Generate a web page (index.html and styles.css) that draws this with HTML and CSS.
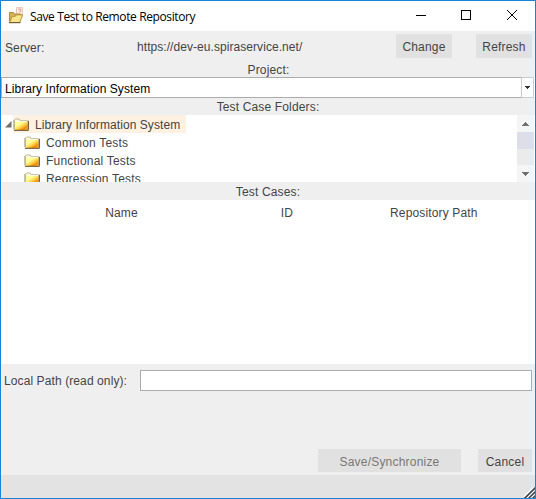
FILE: index.html
```html
<!DOCTYPE html>
<html lang="en">
<head>
<meta charset="utf-8">
<title>Save Test to Remote Repository</title>
<link rel="stylesheet" href="styles.css">
</head>
<body>
<svg width="0" height="0" class="defs">
  <defs>
    <linearGradient id="gold" x1="0" y1="0" x2="1" y2="1">
      <stop offset=".3" stop-color="#ffff99"/><stop offset=".55" stop-color="#ffd24a"/><stop offset=".78" stop-color="#f58a08"/><stop offset="1" stop-color="#ffc04a"/>
    </linearGradient>
    <symbol id="folder" viewBox="0 0 16 13">
      <path d="M1.500 11V2L2.500 1H6l1.500 1.500H15V11z" fill="#fffbd8" stroke="#bdb798"/>
      <path d="M2 4h12.500v8H2z" fill="url(#gold)"/>
      <path d="M.5 2v9.500M6.500 2.500H15" fill="none" stroke="#c9c5ac"/>
      <path d="M1 12.300h14.300V3" fill="none" stroke="#5a4620"/>
    </symbol>
  </defs>
</svg>
<div class="window">
  <header class="titlebar">
    <svg class="app-icon" width="16" height="17" viewBox="0 0 16 17">
      <path d="M8.5.5h5.8v9H8.5z" fill="#fff0e8" stroke="#e8c8b8"/>
      <path d="M10 2.5q3-1.500 3 .5t-2 2M11 6.500l2 1.500" fill="none" stroke="#e8957a"/>
      <path d="M1.500 14V5.500h4l1 1.500h6V10" fill="#d8b355" stroke="#a98a45"/>
      <path d="M1.500 15.500l2.800-6.200h3l1-1.500h6.400l-3 7.700z" fill="#fbe48b" stroke="#b38d38"/>
      <path d="M1 15.700h11.500" stroke="#665127"/>
    </svg>
    <h1><span>Save Test to Remote Repository</span></h1>
    <svg class="controls" width="120" height="30" viewBox="415 1 120 30" fill="none" stroke="#000" shape-rendering="crispEdges">
      <path d="M416 15.500h10M461.500 10.500h9v9h-9z"/>
      <path d="M507 10l10 10M517 10l-10 10" shape-rendering="auto"/>
    </svg>
  </header>
  <section class="server">
    <span class="server-label">Server:</span>
    <span class="server-url">https://dev-eu.spiraservice.net/</span>
    <button class="change">Change</button>
    <button class="refresh">Refresh</button>
  </section>
  <div class="caption project"><span>Project:</span></div>
  <div class="combo">
    <div class="combo-value"><span>Library Information System</span></div>
    <div class="combo-arrow"><svg width="5" height="3" shape-rendering="crispEdges"><path d="M0 0h5v1H4v1H3v1H2V2H1V1H0z" fill="#333"/></svg></div>
  </div>
  <div class="caption folders"><span>Test Case Folders:</span></div>
  <div class="tree">
    <ul>
      <li class="root"><svg class="expander" width="7" height="7"><path d="M6.500 0v6.500H0z" fill="#707070"/></svg><div class="selected"><svg width="16" height="13"><use href="#folder"/></svg><span>Library Information System</span></div></li>
      <li class="child"><svg width="16" height="13"><use href="#folder"/></svg><span>Common Tests</span></li>
      <li class="child"><svg width="16" height="13"><use href="#folder"/></svg><span>Functional Tests</span></li>
      <li class="child"><svg width="16" height="13"><use href="#folder"/></svg><span>Regression Tests</span></li>
    </ul>
    <div class="scrollbar">
      <div class="arrow"><svg width="7" height="4" shape-rendering="crispEdges"><path d="M3 0h1v1h1v1h1v1h1v1H0V3h1V2h1V1h1z" fill="#707070"/></svg></div>
      <div class="thumb"></div>
      <div class="arrow down"><svg width="7" height="4" shape-rendering="crispEdges"><path d="M0 0h7v1H6v1H5v1H4v1H3V3H2V2H1V1H0z" fill="#707070"/></svg></div>
    </div>
  </div>
  <div class="caption cases"><span>Test Cases:</span></div>
  <div class="table"><span class="c-name">Name</span><span class="c-id">ID</span><span class="c-path">Repository Path</span></div>
  <div class="path"><label for="local">Local Path (read only):</label><input id="local" readonly></div>
  <div class="actions"><button class="save" disabled>Save/Synchronize</button><button class="cancel">Cancel</button></div>
  <footer><svg width="11" height="11"><path d="M0 11L11 0M4 11l7-7M8 11l3-3" stroke="#fff" stroke-width="3"/><path d="M.5 11.500l11-11M4.500 11.500l7-7M8.500 11.500l3-3" stroke="#444" stroke-width="1.600"/></svg></footer>
</div>
</body>
</html>
```

FILE: styles.css
```css
* { box-sizing: border-box; }
body { margin: 0; font: 12px/16px "Liberation Sans", Arial, sans-serif; color: #444; }
.defs { position: absolute; }
svg { display: block; flex: none; }
span, label { white-space: nowrap; }
.window { width: 536px; height: 499px; border: 1px solid #1883d7; background: #efefef; display: flex; flex-direction: column; overflow: hidden; }
.window > * { flex: none; }

.titlebar { height: 30px; background: #fff; display: flex; }
.app-icon { margin: 6px 0 0 7px; }
h1 { margin: 7px auto 0 6px; font: 12px/18px "Open Sans", "Noto Sans", sans-serif; letter-spacing: -.38px; color: #000; }

.server { height: 31px; display: flex; align-items: flex-start; }
.server-label { width: 132px; padding: 9px 0 0 4px; letter-spacing: .1px; }
.server-url { width: 263px; padding: 8px 0 0 4px; letter-spacing: .06px; }
button { border: 0; border-radius: 0; padding: 2px 0 0; background: #e1e1e1; color: #444; font: inherit; letter-spacing: .2px; }
.change, .refresh { width: 56px; height: 24px; margin-top: 3px; }
.refresh { margin-left: 24px; }

.caption { display: flex; justify-content: center; letter-spacing: .15px; }
.project { height: 15px; padding-left: 1px; }
.folders { height: 17px; padding-top: 1px; }
.cases { height: 18px; padding-top: 2px; }

.combo { height: 21px; display: flex; padding-right: 1px; background: #fff; }
.combo-value { width: 521px; border: 1px solid #acacac; border-right-color: #ccc; color: #000; padding: 3px 0 0 3px; letter-spacing: .07px; }
.combo-arrow { flex: 1; border: 1px solid #ccc; border-left: 0; display: flex; align-items: center; justify-content: center; }

.tree { height: 67px; background: #fff; display: flex; overflow: hidden; padding-right: 1px; }
ul { flex: 1; margin: 0; padding: 0; list-style: none; letter-spacing: .2px; }
li { height: 18px; display: flex; align-items: center; }
.expander { margin: 0 1px 0 4px; }
.selected { height: 18px; width: 173px; display: flex; align-items: center; background: #fff1e2; letter-spacing: .07px; }
.selected span { padding-left: 6px; }
li span { padding: 2px 0 0 6px; }
.child { padding-left: 23px; }
.scrollbar { width: 17px; background: #ebebeb; }
.arrow { height: 17px; background: #f5f5f5; display: flex; align-items: center; justify-content: center; }
.thumb { height: 17px; background: #dedee8; }
.down { margin-top: 16px; }

.table { height: 164px; background: #fff; display: flex; padding-top: 5px; letter-spacing: .15px; }
.c-name { width: 241px; text-align: center; }
.c-id { width: 90px; text-align: center; }
.c-path { width: 203px; padding-left: 58px; }

.path { height: 85px; display: flex; align-items: flex-start; padding-top: 6px; }
label { width: 138px; padding: 3px 0 0 3px; letter-spacing: .1px; }
input { width: 392px; height: 21px; margin-left: 1px; padding: 0 3px; border: 1px solid #acacac; border-radius: 0; background: #fff; outline: 0; }
.actions { height: 26px; display: flex; justify-content: flex-end; padding-right: 3px; }
.save { width: 143px; height: 23px; margin-right: 17px; color: #777; }
.cancel { width: 54px; height: 23px; }
footer { height: 23px; background: #e3e3e3; display: flex; align-items: flex-end; justify-content: flex-end; }
```
